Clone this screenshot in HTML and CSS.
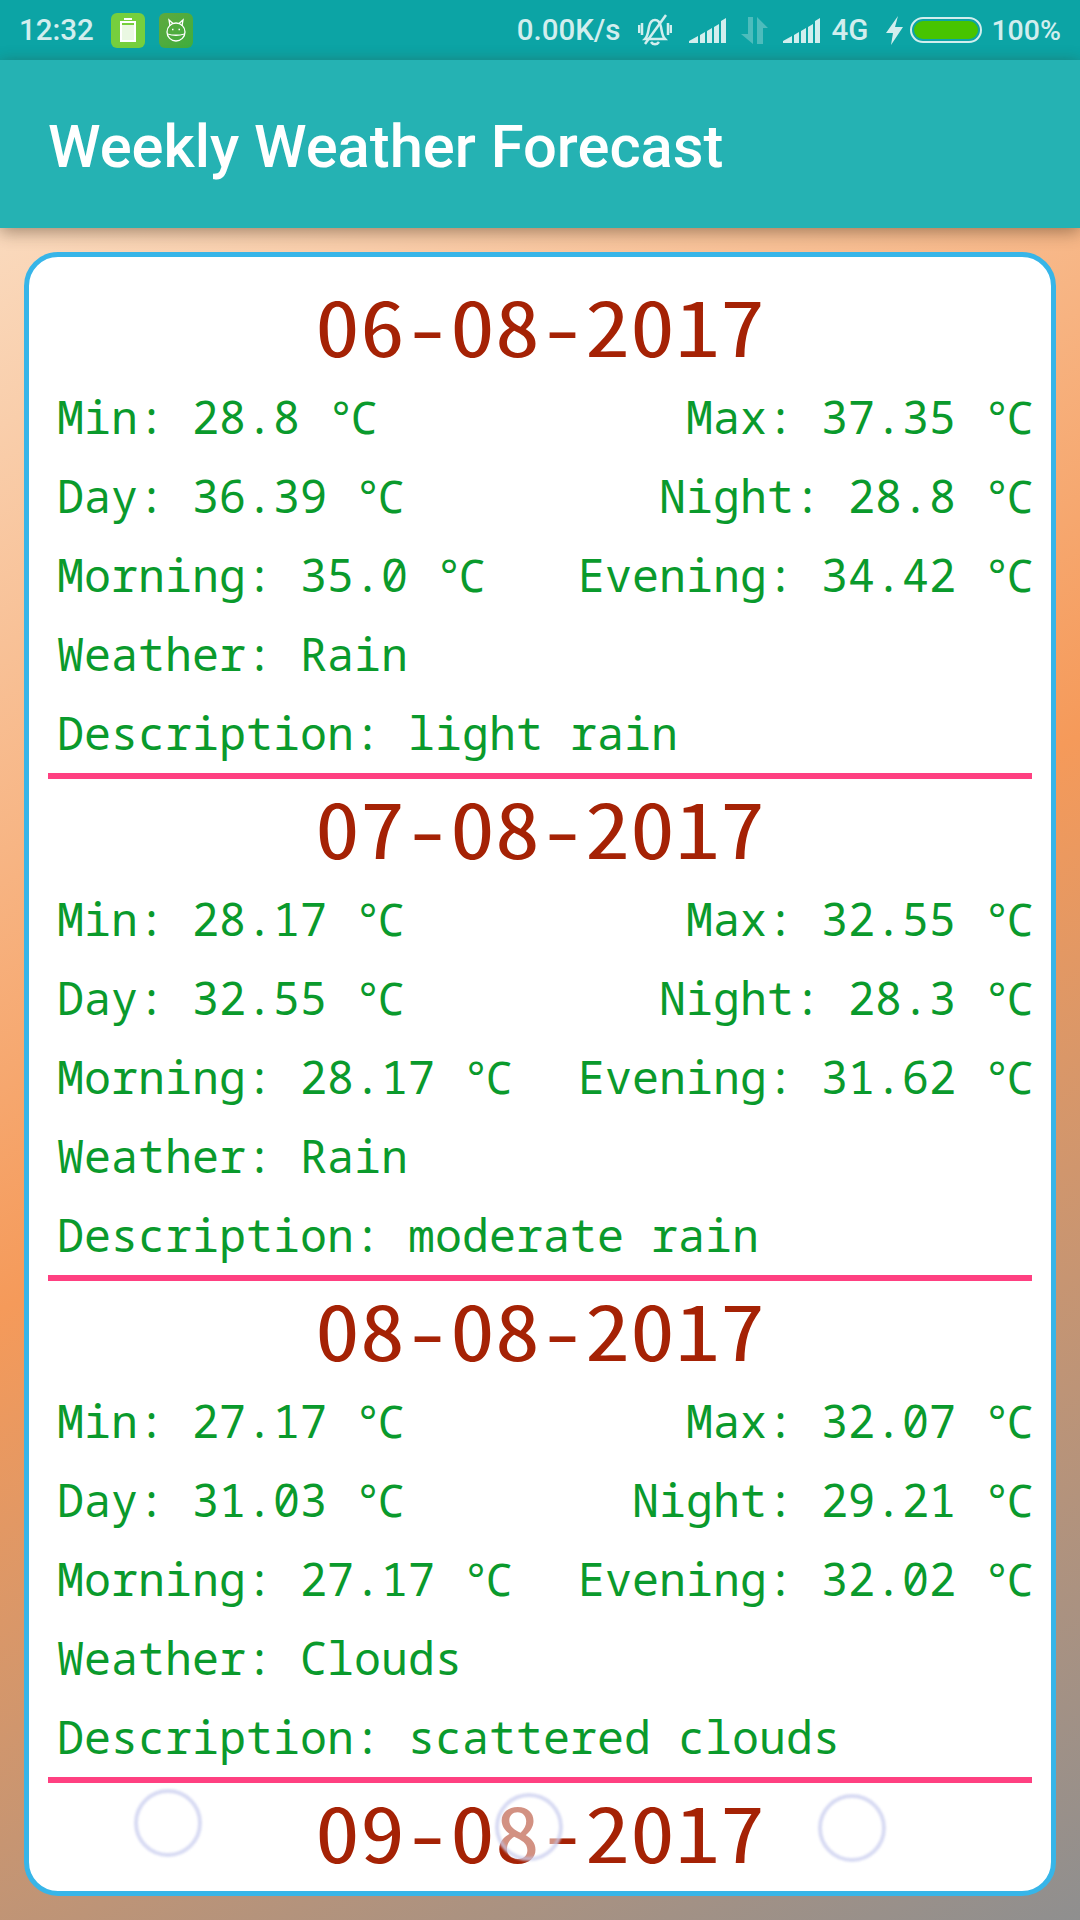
FILE: index.html
```html
<!DOCTYPE html>
<html lang="en">
<head>
    <meta charset="UTF-8">
    <meta name="viewport" content="width=device-width, initial-scale=1.0">
    <title>Weekly Weather Forecast</title>
    <link rel="stylesheet" href="styles.css">
</head>
<body>
    <div class="screen">
        <div class="status-bar">
            <div class="status-left">
                <span class="clock">12:32</span>
                <span class="app-badge badge-battery">
                    <svg width="16" height="24" viewBox="0 0 16 24" fill="none" stroke="#fff" stroke-width="2">
                        <path d="M4 1h8"/>
                        <rect x="1" y="4" width="14" height="19"/>
                        <rect x="2" y="7" width="12" height="15" fill="#fff" fill-opacity="0.85" stroke="none"/>
                    </svg>
                </span>
                <span class="app-badge badge-android">
                    <svg width="22" height="24" viewBox="0 0 22 24" fill="none" stroke="#fff" stroke-width="1.300">
                        <circle cx="11" cy="14" r="9"/>
                        <path d="M2.500 16c5 1.500 12 1.500 17 0M5 8L4 2l4 3.500M17 8l1-6-4 3.500"/>
                        <path d="M7 11.500h1.500M13.500 11.500h1.500"/>
                    </svg>
                </span>
            </div>
            <div class="status-right">
                <span class="speed">0.00K/s</span>
                <svg class="bell" width="34" height="32" viewBox="0 0 34 32" fill="none" stroke="#d2eeee" stroke-width="2.500">
                    <path d="M7 25c3-3 3-7 4-12 1-5 3-7 6-7s5 2 6 7c1 5 1 9 4 12z"/>
                    <path d="M13 28c2 3 6 3 8 0" stroke-width="2.500"/>
                    <path d="M28 1L7 30"/>
                    <path d="M1 11v8M4 9v12M30 9v12M33 11v8"/>
                </svg>
                <svg class="signal" width="37" height="26" viewBox="0 0 37 26" fill="#d2eeee">
                    <path d="M0 26v-2l9-5v7zM11 26v-8l5-3v11zM18 26v-12l5-3v15zM25 26v-16l5-3v19zM32 26V4l5-3v25z"/>
                </svg>
                <svg class="arrows" width="27" height="27" viewBox="0 0 27 27" fill="#4dbcbc">
                    <path d="M7 0h5v27L0 17h7zM16 0l11 11h-5v16h-6z"/>
                </svg>
                <svg class="signal" width="37" height="26" viewBox="0 0 37 26" fill="#d2eeee">
                    <path d="M0 26v-2l9-5v7zM11 26v-8l5-3v11zM18 26v-12l5-3v15zM25 26v-16l5-3v19zM32 26V4l5-3v25z"/>
                </svg>
                <span class="net">4G</span>
                <svg class="bolt" width="17" height="29" viewBox="0 0 17 29" fill="#d2eeee">
                    <path d="M12 0L0 17h7L5 29 17 11H9z"/>
                </svg>
                <span class="battery"><span class="battery-fill"></span></span>
                <span class="percent">100%</span>
            </div>
        </div>

        <header class="app-bar">Weekly Weather Forecast</header>

        <main class="content">
            <div class="card">
                <section class="day">
                    <h2 class="date">06-08-2017</h2>
                    <div class="row"><span>Min: 28.8 ℃</span><span>Max: 37.35 ℃</span></div>
                    <div class="row"><span>Day: 36.39 ℃</span><span>Night: 28.8 ℃</span></div>
                    <div class="row"><span>Morning: 35.0 ℃</span><span>Evening: 34.42 ℃</span></div>
                    <div class="row"><span>Weather: Rain</span></div>
                    <div class="row"><span>Description: light rain</span></div>
                </section>
                <section class="day">
                    <h2 class="date">07-08-2017</h2>
                    <div class="row"><span>Min: 28.17 ℃</span><span>Max: 32.55 ℃</span></div>
                    <div class="row"><span>Day: 32.55 ℃</span><span>Night: 28.3 ℃</span></div>
                    <div class="row"><span>Morning: 28.17 ℃</span><span>Evening: 31.62 ℃</span></div>
                    <div class="row"><span>Weather: Rain</span></div>
                    <div class="row"><span>Description: moderate rain</span></div>
                </section>
                <section class="day">
                    <h2 class="date">08-08-2017</h2>
                    <div class="row"><span>Min: 27.17 ℃</span><span>Max: 32.07 ℃</span></div>
                    <div class="row"><span>Day: 31.03 ℃</span><span>Night: 29.21 ℃</span></div>
                    <div class="row"><span>Morning: 27.17 ℃</span><span>Evening: 32.02 ℃</span></div>
                    <div class="row"><span>Weather: Clouds</span></div>
                    <div class="row"><span>Description: scattered clouds</span></div>
                </section>
                <section class="day">
                    <h2 class="date">09-08-2017</h2>
                </section>
            </div>
        </main>

        <span class="touch touch-left"></span>
        <span class="touch touch-middle"></span>
        <span class="touch touch-right"></span>
    </div>
</body>
</html>
```

FILE: styles.css
```css
html, body {
    margin: 0;
    padding: 0;
}

.screen {
    position: relative;
    width: 1080px;
    height: 1920px;
    overflow: hidden;
    display: flex;
    flex-direction: column;
    background: linear-gradient(152deg, #fbe7d2 0%, #f59a5a 52.5%, #8f8f8f 100%);
    font-family: Roboto, sans-serif;
}

.status-bar {
    height: 60px;
    flex-shrink: 0;
    background-color: #0ca4a5;
    display: flex;
    align-items: center;
    justify-content: space-between;
    padding: 0 19px;
    color: #d2eeee;
    font-size: 29.5px;
    font-weight: 500;
}

.status-left, .status-right {
    display: flex;
    align-items: center;
}

.clock {
    margin-right: 17px;
}

.app-badge {
    width: 34px;
    height: 35px;
    border-radius: 6px;
    margin-right: 14px;
    display: flex;
    align-items: center;
    justify-content: center;
}

.badge-battery {
    background-color: #76cf3d;
}

.badge-android {
    background: linear-gradient(135deg, #5fa93e, #3eae3e);
}

.bell {
    margin-left: 17px;
    margin-right: 17px;
}

.arrows {
    margin-left: 15px;
    margin-right: 15px;
}

.net {
    margin-left: 12px;
    margin-right: 18px;
}

.battery {
    width: 72px;
    height: 26px;
    box-sizing: border-box;
    margin-left: 7px;
    margin-right: 9px;
    border: 2px solid #d2eeee;
    border-radius: 13px;
    padding: 2px;
    display: flex;
}

.battery-fill {
    flex: 1;
    background-color: #47c400;
    border-radius: 9px;
}

.percent {
    font-size: 28.5px;
}

.app-bar {
    height: 168px;
    flex-shrink: 0;
    box-sizing: border-box;
    padding: 3px 0 0 48px;
    background-color: #25b2b3;
    color: #fff;
    font-size: 59.7px;
    font-weight: 500;
    line-height: 168px;
    box-shadow: 0 4px 16px rgba(60, 40, 20, 0.45);
    position: relative;
}

.content {
    flex: 1;
    padding: 24px 24px;
    min-height: 0;
}

.card {
    height: 1644px;
    box-sizing: border-box;
    background-color: #fff;
    border: 5px solid #37b5e8;
    border-radius: 34px;
    padding: 0 19px;
    overflow: hidden;
}

.day {
    border-bottom: 6px solid #ff4081;
    height: 502px;
    box-sizing: border-box;
}

.day:first-child {
    height: 522px;
    padding-top: 20px;
}

.day:last-child {
    border-bottom: none;
}

/* the plain Noto mono has a slashed zero, this one does not; it is narrower so it is sized up and squashed */
.date {
    margin: 0;
    font-family: "Noto Sans Mono CJK SC", monospace;
    font-size: 90px;
    font-weight: normal;
    line-height: 100px;
    color: #a52205;
    text-align: center;
    transform: translateY(-3px) scaleY(0.85);
}

.row {
    display: flex;
    justify-content: space-between;
    height: 79px;
    margin-right: -5px;
    padding-left: 9px;
    font-family: "Noto Sans Mono", monospace;
    font-size: 45px;
    line-height: 79px;
    color: #0a9a2c;
}

.touch {
    position: absolute;
    width: 68px;
    height: 68px;
    box-sizing: border-box;
    border: 4px solid rgba(190, 195, 235, 0.6);
    border-radius: 50%;
    filter: blur(1px);
}

.touch-left {
    left: 134px;
    top: 1789px;
}

.touch-middle {
    left: 495px;
    top: 1793px;
    background-color: rgba(255, 255, 255, 0.5);
}

.touch-right {
    left: 818px;
    top: 1794px;
}
```
